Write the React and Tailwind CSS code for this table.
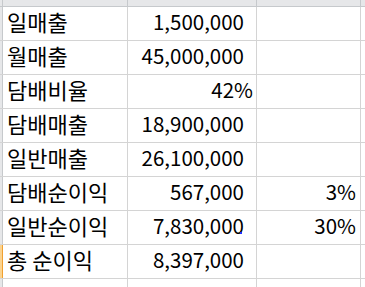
const rows = [
  { label: '일매출', value: '1,500,000', rate: '' },
  { label: '월매출', value: '45,000,000', rate: '' },
  { label: '담배비율', value: '42%', rate: '', pct: true },
  { label: '담배매출', value: '18,900,000', rate: '' },
  { label: '일반매출', value: '26,100,000', rate: '' },
  { label: '담배순이익', value: '567,000', rate: '3%' },
  { label: '일반순이익', value: '7,830,000', rate: '30%', dot: true },
  { label: '총 순이익', value: '8,397,000', rate: '', active: true },
];

const font = { fontFamily: '"Noto Sans CJK KR", "Noto Sans", sans-serif' };

const Row = ({ row }) => (
  <div className="flex h-[34px] border-b border-[#d4d4d4]">
    <div
      className={
        row.active
          ? 'w-[3px] shrink-0 bg-[#fbd38f] border-r border-[#f0a030]'
          : 'w-[3px] shrink-0 bg-[#e6e7e9] border-r border-[#c6c9cc]'
      }
    />
    <div className="w-[125px] shrink-0 border-r border-[#d4d4d4] pl-[4px] text-[22px] leading-[28px] text-black">
      {row.label}
    </div>
    <div
      className={
        row.pct
          ? 'relative w-[129px] shrink-0 border-r border-[#d4d4d4] pr-[3px] text-right text-[20.5px] leading-[29px] text-black'
          : 'relative w-[129px] shrink-0 border-r border-[#d4d4d4] pr-[12px] text-right text-[20.5px] leading-[29px] text-black'
      }
    >
      {row.value}
      {row.dot && <span className="absolute right-[14px] top-[21px] h-[2px] w-[2px] bg-[#2030ff]" />}
    </div>
    <div className="w-[104px] shrink-0 border-r border-[#d4d4d4] pr-[4px] text-right text-[20.5px] leading-[29px] text-black">
      {row.rate}
    </div>
    <div className="flex-1" />
  </div>
);

export default function App() {
  return (
    <div className="w-[365px] h-[287px] overflow-hidden bg-white" style={font}>
      <div className="flex h-[7px] border-b border-[#c6c9cc] bg-[#e6e7e9]">
        <div className="w-[3px] shrink-0 border-r border-[#c6c9cc]" />
        <div className="w-[125px] shrink-0 border-r border-[#c6c9cc]" />
        <div className="w-[129px] shrink-0 border-r border-[#c6c9cc]" />
        <div className="w-[104px] shrink-0 border-r border-[#c6c9cc]" />
        <div className="flex-1" />
      </div>
      {rows.map((row) => (
        <Row key={row.label} row={row} />
      ))}
      <div className="flex h-[34px]">
        <div className="w-[3px] shrink-0 bg-[#e6e7e9] border-r border-[#c6c9cc]" />
        <div className="w-[125px] shrink-0 border-r border-[#d4d4d4]" />
        <div className="w-[129px] shrink-0 border-r border-[#d4d4d4]" />
        <div className="w-[104px] shrink-0 border-r border-[#d4d4d4]" />
        <div className="flex-1" />
      </div>
    </div>
  );
}
